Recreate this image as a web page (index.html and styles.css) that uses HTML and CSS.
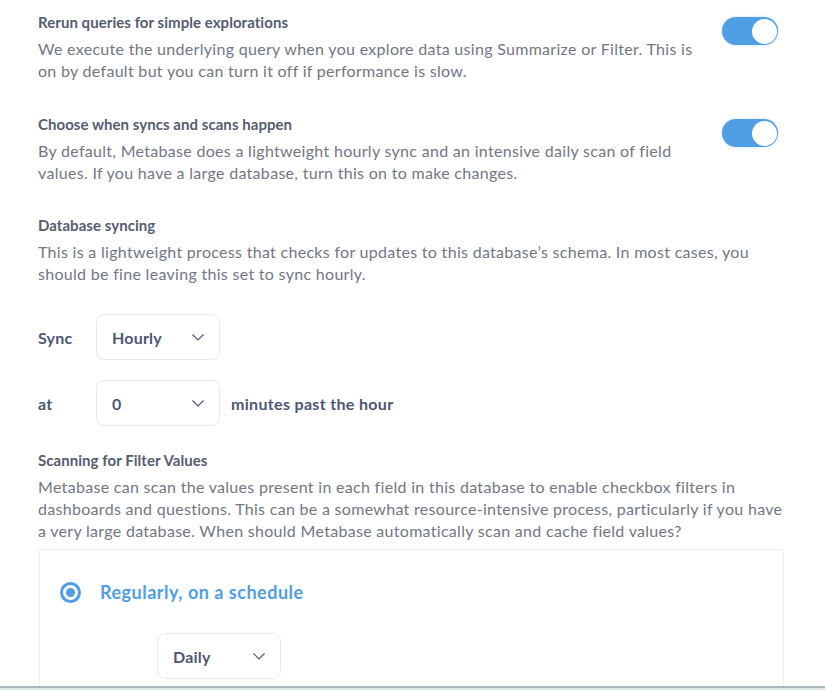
FILE: index.html
```html
<!DOCTYPE html>
<html lang="en">
<head>
<meta charset="utf-8">
<title>Database settings</title>
<link rel="stylesheet" href="styles.css">
</head>
<body>
<main class="page">
  <section class="setting setting-toggle first">
    <div class="setting-text">
      <h3 class="setting-title">Rerun queries for simple explorations</h3>
      <p class="setting-desc">We execute the underlying query when you explore data using Summarize or Filter. This is on by default but you can turn it off if performance is slow.</p>
    </div>
    <span class="toggle is-on"><span class="knob"></span></span>
  </section>

  <section class="setting setting-toggle">
    <div class="setting-text">
      <h3 class="setting-title">Choose when syncs and scans happen</h3>
      <p class="setting-desc">By default, Metabase does a lightweight hourly sync and an intensive daily scan of field values. If you have a large database, turn this on to make changes.</p>
    </div>
    <span class="toggle is-on"><span class="knob"></span></span>
  </section>

  <section class="setting sync">
    <h3 class="setting-title">Database syncing</h3>
    <p class="setting-desc">This is a lightweight process that checks for updates to this database’s schema. In most cases, you should be fine leaving this set to sync hourly.</p>
    <div class="field-row first-row">
      <span class="field-label">Sync</span>
      <div class="select"><span>Hourly</span><svg class="chev" viewBox="0 0 12 7" width="12" height="7"><path d="M0.5 0.5 L6 6 L11.5 0.5" fill="none" stroke="#4c5773" stroke-width="1.2"/></svg></div>
    </div>
    <div class="field-row">
      <span class="field-label">at</span>
      <div class="select"><span>0</span><svg class="chev" viewBox="0 0 12 7" width="12" height="7"><path d="M0.5 0.5 L6 6 L11.5 0.5" fill="none" stroke="#4c5773" stroke-width="1.2"/></svg></div>
      <span class="field-after">minutes past the hour</span>
    </div>
  </section>

  <section class="setting scan">
    <h3 class="setting-title">Scanning for Filter Values</h3>
    <p class="setting-desc">Metabase can scan the values present in each field in this database to enable checkbox filters in dashboards and questions. This can be a somewhat resource-intensive process, particularly if you have a very large database. When should Metabase automatically scan and cache field values?</p>
    <div class="option-box">
      <div class="radio-row">
        <span class="radio"><span class="dot"></span></span>
        <span class="radio-label">Regularly, on a schedule</span>
      </div>
      <div class="schedule">
        <div class="select"><span>Daily</span><svg class="chev" viewBox="0 0 12 7" width="12" height="7"><path d="M0.5 0.5 L6 6 L11.5 0.5" fill="none" stroke="#4c5773" stroke-width="1.2"/></svg></div>
      </div>
    </div>
  </section>
</main>
<div class="bottom-edge"></div>
</body>
</html>
```

FILE: styles.css
```css
html, body {
  margin: 0;
  padding: 0;
  background: #ffffff;
  height: 100%;
  overflow: hidden;
}

body {
  font-family: Lato, "Open Sans", "Liberation Sans", sans-serif;
  color: #4c5773;
}

.page {
  width: 746px;
  padding-left: 38px;
}

.setting {
  margin-top: 32px;
}

.setting.first {
  margin-top: 12px;
}

.setting-toggle {
  display: flex;
  align-items: flex-start;
  justify-content: space-between;
}

.setting-text {
  max-width: 668px;
}

.setting-title {
  margin: 0 0 6px 0;
  font-size: 15px;
  line-height: 20px;
  font-weight: 700;
  letter-spacing: 0.05px;
  color: #555d70;
}

.setting-desc {
  margin: 0;
  font-size: 16px;
  line-height: 22px;
  letter-spacing: 0.3px;
  color: #727784;
}

.toggle {
  flex: none;
  margin-top: 5px;
  margin-right: 6px;
  width: 56px;
  height: 28px;
  border-radius: 14px;
  background: #509ee3;
  box-shadow: 0 0 3px rgba(80, 158, 227, 0.35);
  display: flex;
  align-items: center;
  justify-content: flex-end;
  box-sizing: border-box;
  padding: 0 1px;
}

.knob {
  width: 25px;
  height: 25px;
  border-radius: 50%;
  background: #ffffff;
}

.sync {
  margin-top: 31px;
}

.field-row {
  display: flex;
  align-items: center;
  margin-top: 20px;
}

.field-row.first-row {
  margin-top: 29px;
}

.field-label {
  width: 58px;
  font-size: 16px;
  font-weight: 700;
  letter-spacing: 0.2px;
  color: #4c5773;
}

.field-after {
  margin-left: 11px;
  font-size: 16px;
  font-weight: 700;
  letter-spacing: 0.33px;
  color: #4c5773;
}

.select {
  box-sizing: border-box;
  width: 124px;
  height: 46px;
  border: 1px solid #e8eaee;
  border-radius: 8px;
  padding: 0 15px;
  display: flex;
  align-items: center;
  justify-content: space-between;
  font-size: 16px;
  font-weight: 700;
  letter-spacing: 0.2px;
  color: #4c5773;
}

.chev {
  display: block;
  margin-top: 1px;
}

.scan {
  margin-top: 24px;
}

.option-box {
  margin-top: 7px;
  margin-left: 1px;
  border: 1px solid #eef0f2;
  border-bottom: none;
  height: 200px;
  padding-left: 20px;
}

.radio-row {
  display: flex;
  align-items: center;
  margin-top: 31px;
  height: 22px;
}

.radio {
  box-sizing: border-box;
  width: 21px;
  height: 21px;
  border: 3px solid #509ee3;
  border-radius: 50%;
  display: flex;
  align-items: center;
  justify-content: center;
}

.dot {
  width: 9px;
  height: 9px;
  border-radius: 50%;
  background: #509ee3;
}

.radio-label {
  margin-left: 19px;
  font-size: 18px;
  font-weight: 700;
  letter-spacing: 0.5px;
  color: #509ee3;
}

.schedule {
  margin-top: 30px;
  padding-left: 97px;
}

.bottom-edge {
  position: fixed;
  left: 0;
  right: 0;
  bottom: 0;
  height: 2px;
  border-top: 2px solid #a9b9bf;
  background: #dce7ec;
}
```
